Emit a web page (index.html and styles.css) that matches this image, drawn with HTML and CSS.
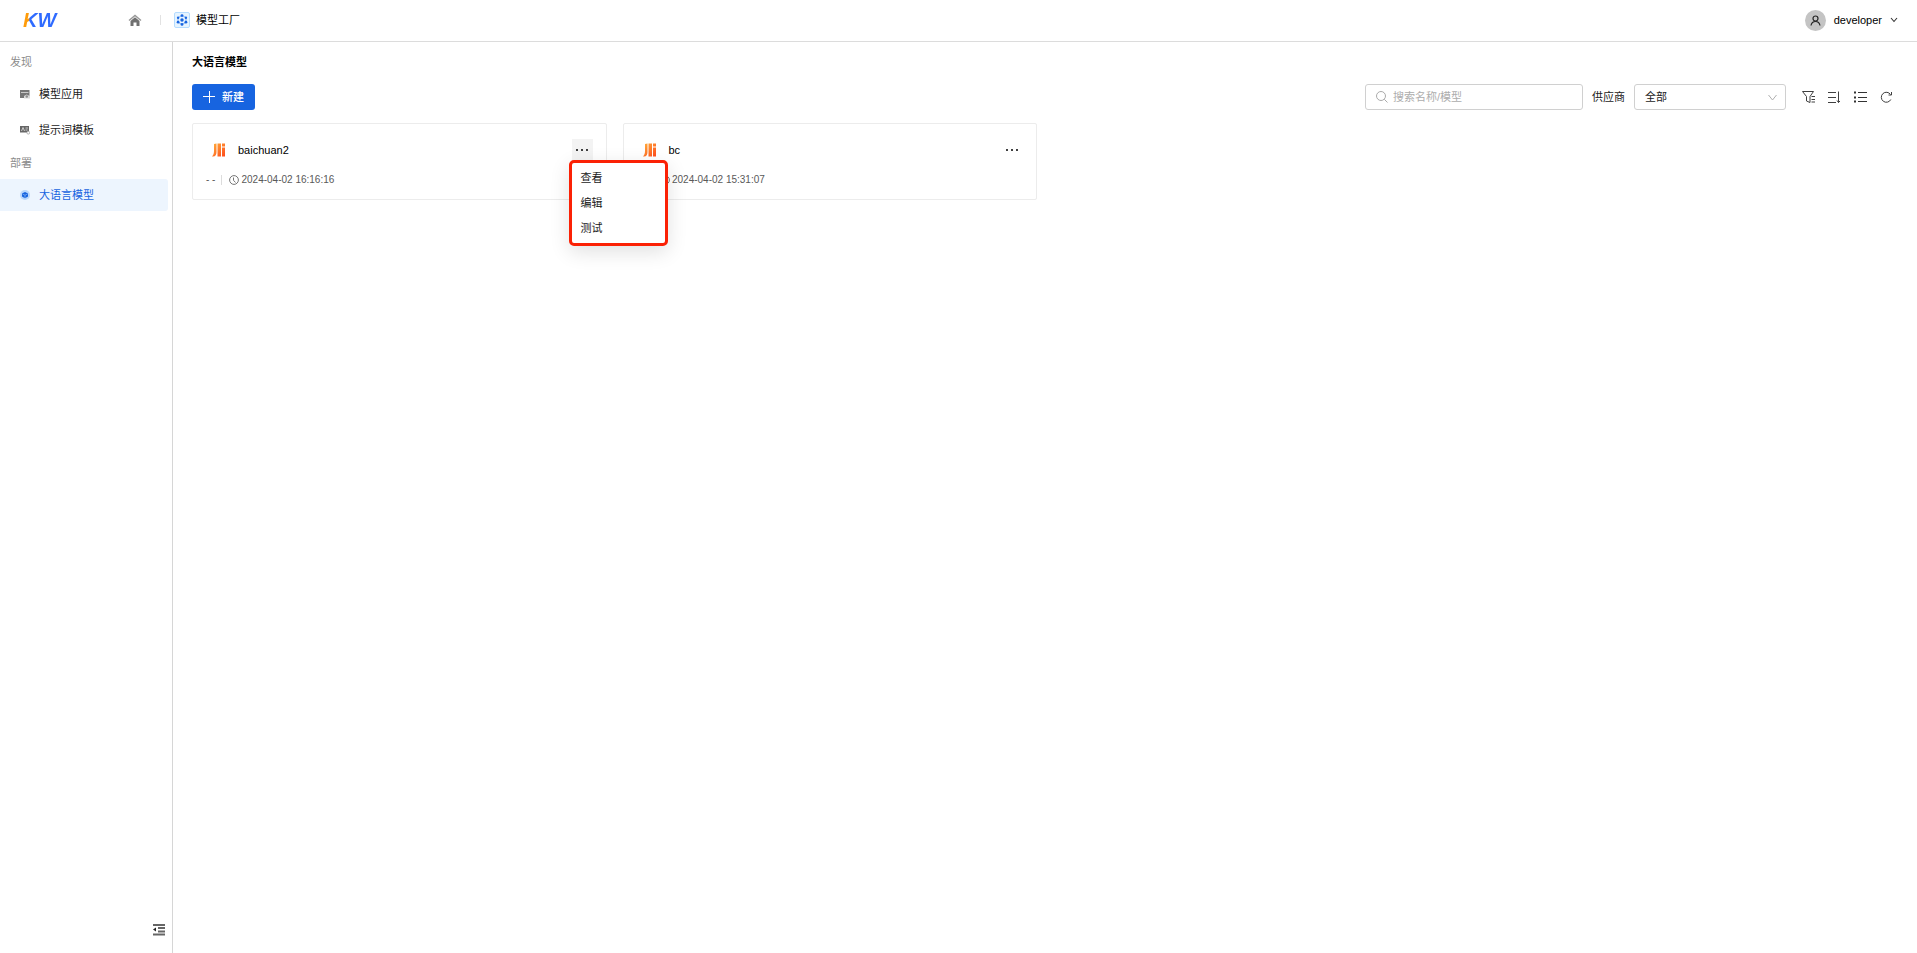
FILE: index.html
```html
<!DOCTYPE html>
<html lang="zh-CN">
<head>
<meta charset="utf-8">
<title>模型工厂</title>
<link rel="stylesheet" href="styles.css">
</head>
<body>
<svg class="defs" aria-hidden="true">
  <defs>
    <linearGradient id="flame" x1="0" y1="0" x2="1" y2="1">
      <stop offset="0" stop-color="#ffb03a"/>
      <stop offset="1" stop-color="#ff4a1c"/>
    </linearGradient>
    <symbol id="brand" viewBox="0 0 14 14">
      <path fill="url(#flame)" d="M2 1 4.500.5V9C4.500 11.500 3.500 13.500 1 13.500H0C1.500 12 2 10 2 8ZM5.500.5H9V13.500H5.500ZM10 4.500H13V13.500H10ZM10 .5H13V3.500H10Z"/>
    </symbol>
    <symbol id="clock" viewBox="0 0 10 10">
      <g fill="none" stroke="#666" stroke-width=".9"><circle cx="5" cy="5" r="4.400"/><path d="M4.500 2.500V5.300L6.500 7.500"/></g>
    </symbol>
    <symbol id="dots" viewBox="0 0 13 3">
      <path fill="#404040" d="M0 1H2V3H0ZM5 1H7V3H5ZM10 1H12V3H10Z"/>
    </symbol>
  </defs>
</svg>

<header class="header">
  <a class="logo" href="#">KW</a>
  <a class="home" href="#" aria-label="首页">
    <svg width="14" height="13" viewBox="0 0 14 13"><path d="M1 6.500 7 1.500 13 6.500" fill="none" stroke="#999" stroke-width="1.500"/><path d="M2.500 7 7 3.300 11.500 7V12H8.500V8.500H5.500V12H2.500Z" fill="#707070"/></svg>
  </a>
  <span class="divider"></span>
  <a class="product" href="#">
    <svg width="16" height="16" viewBox="0 0 16 16"><rect x=".5" y=".5" width="15" height="15" rx="1.500" fill="#e6f4ff" stroke="#b5dcff"/><path d="M8 3.500 12 5.700V10.300L8 12.500 4 10.300V5.700Z" fill="none" stroke="#6ea2f0" stroke-width=".8"/><g fill="#1764e0"><circle cx="8" cy="3.600" r="1.400"/><circle cx="11.900" cy="5.800" r="1.200"/><circle cx="11.900" cy="10.200" r="1.400"/><circle cx="8" cy="12.400" r="1.400"/><circle cx="4.100" cy="10.200" r="1.400"/><circle cx="4.100" cy="5.800" r="1.200"/><circle cx="8" cy="8" r="1.700"/></g></svg>
    <span>模型工厂</span>
  </a>
  <button class="user" type="button">
    <span class="avatar"><svg width="11" height="11" viewBox="0 0 11 11" fill="none" stroke="#262626" stroke-width="1.200"><circle cx="5.500" cy="3.500" r="2.500"/><path d="M1 10.500C1.500 7.800 3 6.500 5.500 6.500S9.500 7.800 10 10.500"/></svg></span>
    <span>developer</span>
    <svg width="8" height="6" viewBox="0 0 8 6" fill="none" stroke="#333" stroke-width="1.100"><path d="M1 1 4 4.500 7 1"/></svg>
  </button>
</header>

<div class="body">
  <nav class="sidebar">
    <h2 class="group">发现</h2>
    <a class="item" href="#">
      <svg width="10" height="10" viewBox="0 0 10 10"><path d="M0 1H9.500V9H0Z" fill="#757575"/><path d="M1 3.500H8.500" stroke="#ddd" stroke-width=".8"/><path d="M4 9.500V7L6.500 5.500 10 7V9.500Z" fill="#d9d9d9"/><circle cx="6.800" cy="7.500" r="1.200" fill="#8c8c8c"/></svg>
      <span>模型应用</span>
    </a>
    <a class="item" href="#">
      <svg width="10" height="10" viewBox="0 0 10 10"><path d="M0 1H9V7.500H0Z" fill="#666"/><path d="M1.500 6 3 2.500 4.500 6M5.500 3H8M5.500 5H7.500" fill="none" stroke="#e6e6e6" stroke-width=".8"/><circle cx="8.300" cy="7.700" r="1.400" fill="#fff" stroke="#999" stroke-width=".7"/></svg>
      <span>提示词模板</span>
    </a>
    <h2 class="group deploy">部署</h2>
    <a class="item active" href="#" aria-current="page">
      <svg width="10" height="10" viewBox="0 0 10 10"><circle cx="5" cy="5" r="5" fill="#bad7fb"/><path d="M5 2 8 3.500V6.500L5 8.300 2 6.500V3.500Z" fill="#1764e0"/><path d="M2.500 4 5 5.200 7.500 4M5 5.200V8" fill="none" stroke="#bad7fb" stroke-width=".5"/></svg>
      <span>大语言模型</span>
    </a>
    <button class="collapse" type="button" aria-label="收起菜单">
      <svg width="12" height="12" viewBox="0 0 12 12"><path d="M0 1H12M5 4H12M5 7.500H12M0 10.500H12" stroke="#666" stroke-width="1.800"/><path d="M0 5.500 3 3.500V7.500Z" fill="#222"/></svg>
    </button>
  </nav>

  <main class="main">
    <h1 class="title">大语言模型</h1>
    <div class="toolbar">
      <button class="create" type="button">
        <svg width="12" height="12" viewBox="0 0 12 12"><path d="M6.500 0V12M0 5.500H12" stroke="#fff"/></svg>
        <span>新建</span>
      </button>
      <div class="search">
        <svg width="12" height="12" viewBox="0 0 12 12" fill="none" stroke="#aaa"><circle cx="5" cy="5" r="4.500"/><path d="M8.300 8.300 11.500 11.500"/></svg>
        <input type="text" placeholder="搜索名称/模型" aria-label="搜索名称/模型">
      </div>
      <label for="vendor">供应商</label>
      <div class="select">
        <select id="vendor"><option>全部</option></select>
        <svg width="9" height="7" viewBox="0 0 9 7" fill="none" stroke="#b0b0b0"><path d="M.5 1 4.500 6 8.500 1"/></svg>
      </div>
      <div class="tools">
        <button type="button" aria-label="筛选"><svg width="14" height="14" viewBox="0 0 14 14" fill="none" stroke="#404040"><path d="M.5 1.500H11.500L8 6.500V12.500L4.500 11V6.500ZM9.500 6.500H13M9.500 9.500H13M9.500 12H13"/></svg></button>
        <button type="button" aria-label="排序"><svg width="14" height="14" viewBox="0 0 14 14" fill="none" stroke="#404040"><path d="M0 2.500H8M0 7.500H8M0 12.500H8M10.500 1.500V12.500M9 10.500 10.500 12.500 12 11"/></svg></button>
        <button type="button" aria-label="列表"><svg width="14" height="14" viewBox="0 0 14 14" fill="none" stroke="#333"><path d="M4 2.500H13M4 7.500H13M4 11.500H13"/><path d="M0 2.500H2M0 7.500H2M0 11.500H2" stroke-width="2"/></svg></button>
        <button type="button" aria-label="刷新"><svg width="14" height="14" viewBox="0 0 14 14" fill="none" stroke="#404040"><path d="M10.800 9.500A5 5 0 1 1 10.500 4.500M11.500 2V5H8.500"/></svg></button>
      </div>
    </div>

    <div class="cards">
      <article class="card">
        <div class="card-head">
          <svg class="brand"><use href="#brand"/></svg>
          <h3>baichuan2</h3>
          <div class="more">
            <button class="open" type="button" aria-label="更多" aria-expanded="true"><svg class="dots"><use href="#dots"/></svg></button>
            <div class="menu" role="menu">
              <button type="button" role="menuitem">查看</button>
              <button type="button" role="menuitem">编辑</button>
              <button type="button" role="menuitem">测试</button>
            </div>
          </div>
        </div>
        <div class="meta"><span class="owner">- -</span><svg class="clock"><use href="#clock"/></svg><time>2024-04-02 16:16:16</time></div>
      </article>
      <article class="card">
        <div class="card-head">
          <svg class="brand"><use href="#brand"/></svg>
          <h3>bc</h3>
          <div class="more">
            <button type="button" aria-label="更多"><svg class="dots"><use href="#dots"/></svg></button>
          </div>
        </div>
        <div class="meta"><span class="owner">- -</span><svg class="clock"><use href="#clock"/></svg><time>2024-04-02 15:31:07</time></div>
      </article>
    </div>
  </main>
</div>
</body>
</html>
```

FILE: styles.css
```css
* { box-sizing: border-box; }

body {
  margin: 0;
  min-height: 100vh;
  display: flex;
  flex-direction: column;
  background: #fff;
  color: #1a1a1a;
  font: 11px/16px "Liberation Sans", "Noto Sans CJK SC", sans-serif;
}

h1, h2, h3 { margin: 0; font-size: 11px; font-weight: 400; }
a { color: inherit; text-decoration: none; }
button, input, select { font: inherit; color: inherit; }
button { padding: 0; border: 0; background: none; cursor: pointer; }
svg { display: block; flex: none; }
.defs { position: absolute; width: 0; height: 0; }

.header {
  display: flex;
  align-items: center;
  height: 42px;
  padding: 0 19px 1px 23px;
  border-bottom: 1px solid #dcdcdc;
}
.logo {
  width: 36px;
  font-size: 20px;
  line-height: 24px;
  font-weight: 700;
  font-style: italic;
  color: transparent;
  background: linear-gradient(102deg, #ff9c0a 8px, #2f6bff 9px);
  -webkit-background-clip: text;
  background-clip: text;
}
.home { margin-left: 69px; }
.divider { width: 1px; height: 10px; margin: 0 13px 0 18px; background: #e2e2e2; }
.product { display: flex; align-items: center; gap: 6px; color: #000; }
.user { display: flex; align-items: center; gap: 8px; margin-left: auto; color: #000; }
.avatar {
  display: grid;
  place-items: center;
  width: 21px;
  height: 21px;
  border-radius: 50%;
  background: #c4c4c4;
}

.body { display: flex; flex: 1; }

.sidebar {
  display: flex;
  flex-direction: column;
  width: 173px;
  padding: 4px 4px 17px 0;
  border-right: 1px solid #d6d6d6;
}
.group { padding-left: 10px; line-height: 32px; color: #8c8c8c; }
.deploy { margin-top: 1px; }
.item {
  display: flex;
  align-items: center;
  gap: 9px;
  height: 32px;
  padding-left: 20px;
  border-radius: 0 3px 3px 0;
}
.item + .item { margin-top: 4px; }
.item.active { background: #edf5fe; color: #1764e0; }
.collapse { margin: auto 3px 0 auto; }

.main { flex: 1; padding: 12px 19px; }
.title { font-weight: 700; color: #000; }
.toolbar { display: flex; align-items: center; margin: 14px 0 13px; }
.create {
  display: flex;
  align-items: center;
  gap: 7px;
  height: 26px;
  padding: 0 11px;
  border-radius: 3px;
  background: #1764e0;
  color: #fff;
  font-weight: 500;
}
.search {
  display: flex;
  align-items: center;
  gap: 5px;
  width: 218px;
  height: 26px;
  margin: 0 9px 0 auto;
  padding: 0 10px;
  border: 1px solid #d0d0d0;
  border-radius: 3px;
}
.search input { flex: 1; min-width: 0; padding: 0; border: 0; outline: 0; background: none; }
.search input::placeholder { color: #adadad; }
.select { display: grid; align-items: center; width: 152px; margin-left: 9px; }
.select > * { grid-area: 1 / 1; }
.select select {
  width: 100%;
  height: 26px;
  padding: 0 10px;
  border: 1px solid #d0d0d0;
  border-radius: 3px;
  appearance: none;
  background: #fff;
}
.select svg { justify-self: end; margin-right: 9px; pointer-events: none; }
.tools { display: flex; gap: 12px; margin: 0 4px 0 16px; }

.cards { display: grid; grid-template-columns: repeat(4, 1fr); gap: 16px; }
.card { height: 77px; padding: 15px 13px 10px; border: 1px solid #ececec; border-radius: 2px; }
.card-head { display: flex; align-items: center; height: 21px; padding-left: 6px; }
.brand { width: 14px; height: 14px; }
.card h3 { margin-left: 12px; color: #000; }
.more { position: relative; margin-left: auto; }
.more > button { display: grid; place-items: center; width: 21px; height: 21px; }
.more > .open { background: #f3f3f3; }
.dots { width: 13px; height: 3px; }
.meta {
  display: flex;
  align-items: center;
  margin-top: 12px;
  font-size: 10px;
  line-height: 16px;
  color: #595959;
}
.owner { line-height: 10px; padding-right: 6px; border-right: 1px solid #dcdcdc; }
.clock { width: 10px; height: 10px; margin: 0 2px 0 7px; }

.menu {
  position: absolute;
  z-index: 1;
  top: 21px;
  left: -3px;
  width: 99px;
  padding: 3px 0 2px;
  border: 3px solid #fb2105;
  border-radius: 5px;
  background: #fff;
  box-shadow: 0 6px 20px rgba(0, 0, 0, .12);
}
.menu button { display: block; width: 100%; padding: 4px 9px 5px; text-align: left; line-height: 16px; }
```
